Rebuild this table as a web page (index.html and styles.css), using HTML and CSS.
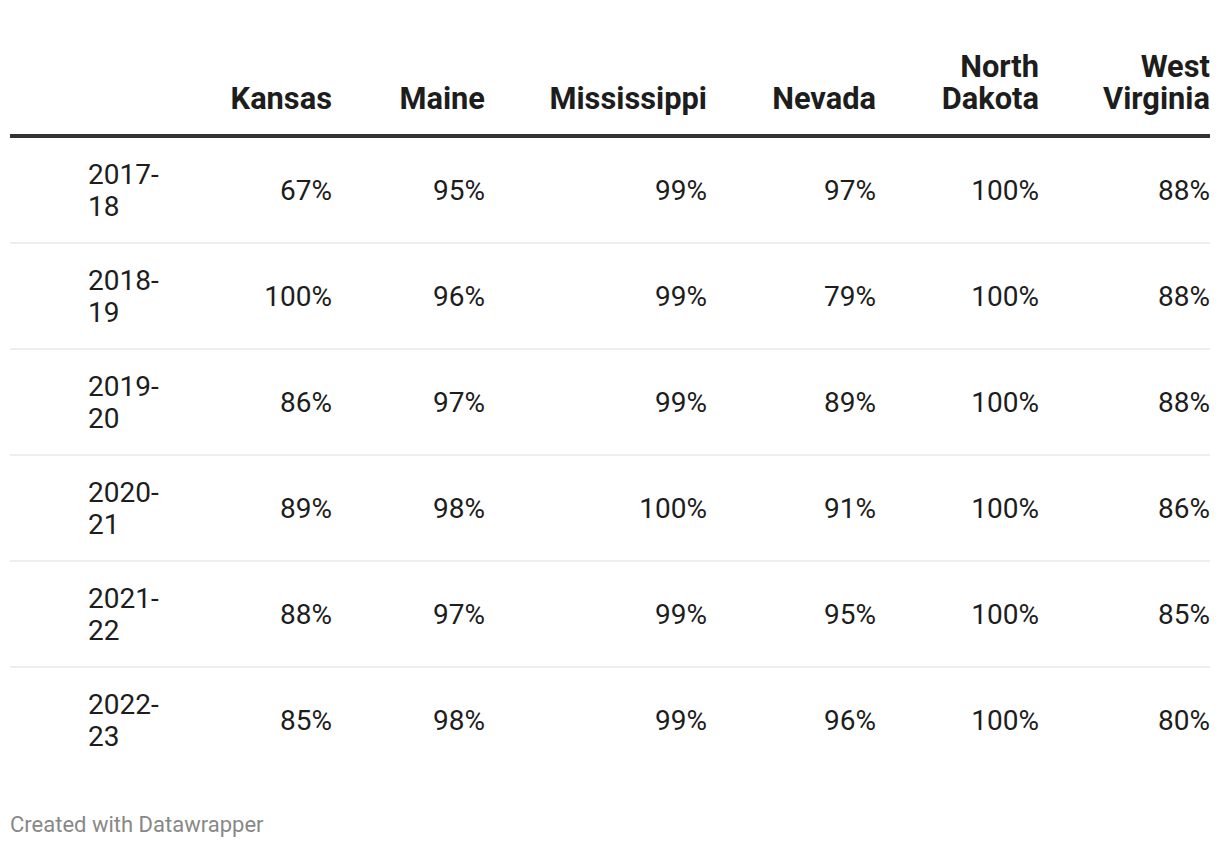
FILE: index.html
```html
<!DOCTYPE html>
<html lang="en">
<head>
<meta charset="utf-8">
<title>Table</title>
<link rel="stylesheet" href="styles.css">
</head>
<body>
<div class="chart">
  <table class="dw-table">
    <colgroup>
      <col class="c0"><col class="c1"><col class="c2"><col class="c3"><col class="c4"><col class="c5"><col class="c6">
    </colgroup>
    <thead>
      <tr>
        <th class="first"></th>
        <th>Kansas</th>
        <th>Maine</th>
        <th>Mississippi</th>
        <th>Nevada</th>
        <th>North<br>Dakota</th>
        <th>West<br>Virginia</th>
      </tr>
    </thead>
    <tbody>
      <tr><td class="first">2017-<br>18</td><td>67%</td><td>95%</td><td>99%</td><td>97%</td><td>100%</td><td>88%</td></tr>
      <tr><td class="first">2018-<br>19</td><td>100%</td><td>96%</td><td>99%</td><td>79%</td><td>100%</td><td>88%</td></tr>
      <tr><td class="first">2019-<br>20</td><td>86%</td><td>97%</td><td>99%</td><td>89%</td><td>100%</td><td>88%</td></tr>
      <tr><td class="first">2020-<br>21</td><td>89%</td><td>98%</td><td>100%</td><td>91%</td><td>100%</td><td>86%</td></tr>
      <tr><td class="first">2021-<br>22</td><td>88%</td><td>97%</td><td>99%</td><td>95%</td><td>100%</td><td>85%</td></tr>
      <tr><td class="first">2022-<br>23</td><td>85%</td><td>98%</td><td>99%</td><td>96%</td><td>100%</td><td>80%</td></tr>
    </tbody>
  </table>
  <div class="footer">Created with Datawrapper</div>
</div>
</body>
</html>
```

FILE: styles.css
```css
html, body {
  margin: 0;
  padding: 0;
  background: #ffffff;
}

.chart {
  padding: 30px 10px 0 10px;
  font-family: Roboto, "Liberation Sans", Arial, sans-serif;
  color: #1d1d1d;
}

.dw-table {
  width: 1200px;
  table-layout: fixed;
  border-collapse: collapse;
  border-spacing: 0;
  font-size: 28px;
  line-height: 32px;
}

.c0 { width: 190px; }
.c1 { width: 132px; }
.c2 { width: 153px; }
.c3 { width: 222px; }
.c4 { width: 169px; }
.c5 { width: 163px; }
.c6 { width: 171px; }

.dw-table th,
.dw-table td {
  padding: 21px 0 19px 0;
  text-align: right;
  font-weight: 400;
}

.dw-table th {
  font-weight: 700;
  font-size: 30.8px;
  vertical-align: bottom;
  border-bottom: 4px solid #333333;
}

.dw-table td {
  vertical-align: middle;
}

.dw-table tbody tr + tr td {
  border-top: 2px solid #eeeeee;
}

.dw-table .first {
  text-align: left;
  padding-left: 78px;
}

.footer {
  margin-top: 39px;
  font-size: 22px;
  line-height: 28px;
  color: #888888;
}
```
